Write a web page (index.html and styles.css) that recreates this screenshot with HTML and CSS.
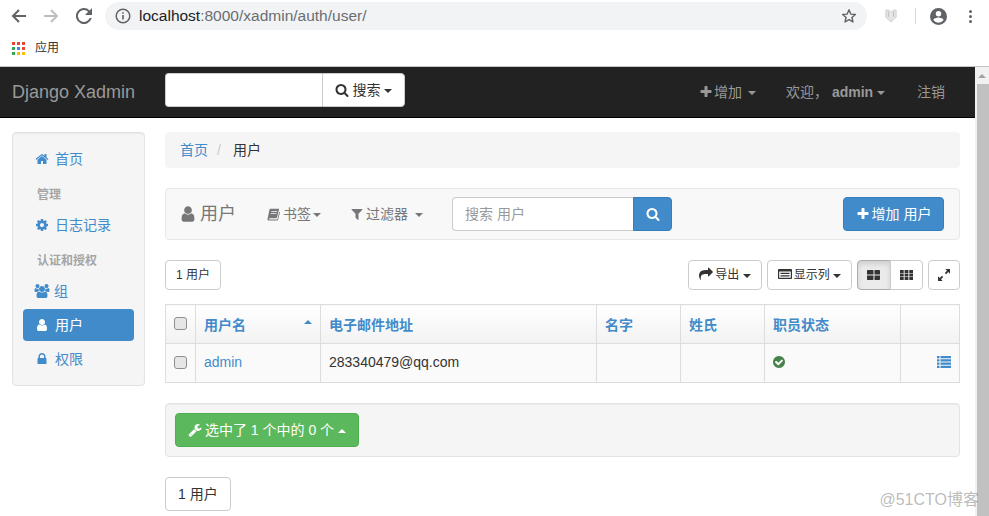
FILE: index.html
```html
<!DOCTYPE html>
<html lang="zh-CN">

<head>
    <meta charset="UTF-8">
    <meta name="viewport" content="width=device-width, initial-scale=1.0">
    <title>Django Xadmin</title>
    <link rel="stylesheet" href="styles.css">
</head>

<body>
    <svg class="sprite" xmlns="http://www.w3.org/2000/svg">
        <defs>
            <symbol id="i-user" viewBox="0 0 1792 1792"><path d="M1536 1399q0 109-62.500 187t-150.500 78h-854q-88 0-150.500-78t-62.500-187q0-85 8.500-160.500t31.500-152 58.500-131 94-89 134.500-34.500q131 128 313 128t313-128q76 0 134.500 34.500t94 89 58.500 131 31.500 152 8.500 160.500zm-256-887q0 159-112.500 271.500t-271.500 112.500-271.500-112.500-112.500-271.500 112.500-271.500 271.500-112.500 271.500 112.500 112.500 271.500z"/></symbol>
            <symbol id="i-search" viewBox="0 0 1792 1792"><path d="M1216 832q0-185-131.500-316.500t-316.500-131.500-316.500 131.500-131.500 316.500 131.500 316.500 316.500 131.500 316.500-131.500 131.500-316.500zm512 832q0 52-38 90t-90 38q-54 0-90-38l-343-342q-179 124-399 124-143 0-273.500-55.500t-225-150-150-225-55.500-273.500 55.500-273.500 150-225 225-150 273.500-55.500 273.500 55.500 225 150 150 225 55.500 273.500q0 220-124 399l343 343q37 37 37 90z"/></symbol>
            <symbol id="i-plus" viewBox="0 0 1792 1792"><path d="M1600 736v192q0 40-28 68t-68 28h-416v416q0 40-28 68t-68 28h-192q-40 0-68-28t-28-68v-416h-416q-40 0-68-28t-28-68v-192q0-40 28-68t68-28h416v-416q0-40 28-68t68-28h192q40 0 68 28t28 68v416h416q40 0 68 28t28 68z"/></symbol>
            <symbol id="i-filter" viewBox="0 0 1792 1792"><path d="M1595 295q17 41-14 70l-493 493v742q0 42-39 59-13 5-25 5-27 0-45-19l-256-256q-19-19-19-45v-486l-493-493q-31-29-14-70 17-39 59-39h1280q42 0 59 39z"/></symbol>
            <symbol id="i-check" viewBox="0 0 1792 1792"><path d="M1412 734q0-28-18-46l-91-90q-19-19-45-19t-45 19l-408 407-226-226q-19-19-45-19t-45 19l-91 90q-18 18-18 46 0 27 18 45l362 362q19 19 45 19 27 0 46-19l543-543q18-18 18-45zm252 162q0 209-103 385.500t-279.500 279.500-385.500 103-385.500-103-279.500-279.500-103-385.500 103-385.500 279.500-279.500 385.500-103 385.500 103 279.500 279.500 103 385.500z"/></symbol>
            <symbol id="i-lock" viewBox="0 0 1792 1792"><path d="M640 768h512v-192q0-106-75-181t-181-75-181 75-75 181v192zm832 96v576q0 40-28 68t-68 28h-960q-40 0-68-28t-28-68v-576q0-40 28-68t68-28h32v-192q0-184 132-316t316-132 316 132 132 316v192h32q40 0 68 28t28 68z"/></symbol>
            <symbol id="i-home" viewBox="0 0 1792 1792"><path d="M1472 992v480q0 26-19 45t-45 19h-384v-384h-256v384h-384q-26 0-45-19t-19-45v-480q0-1 .5-3t.5-3l575-474 575 474q1 2 1 6zm223-69l-62 74q-8 9-21 11h-3q-13 0-21-7l-692-577-692 577q-12 8-24 7-13-2-21-11l-62-74q-8-10-7-23.500t11-21.500l719-599q32-26 76-26t76 26l244 204v-195q0-14 9-23t23-9h192q14 0 23 9t9 23v408l219 182q10 8 11 21.500t-7 23.500z"/></symbol>
            <symbol id="i-cog" viewBox="0 0 1792 1792"><path d="M1152 896q0-106-75-181t-181-75-181 75-75 181 75 181 181 75 181-75 75-181zm512-109v222q0 12-8 23t-20 13l-185 28q-19 54-39 91 35 50 107 138 10 12 10 25t-9 23q-27 37-99 108t-94 71q-12 0-26-9l-138-108q-44 23-91 38-16 136-29 186-7 28-36 28h-222q-14 0-24.500-8.500t-11.500-21.500l-28-184q-49-16-90-37l-141 107q-10 9-25 9-14 0-25-11-126-114-165-168-7-10-7-23 0-12 8-23 15-21 51-66.500t54-70.500q-27-50-41-99l-183-27q-13-2-21-12.500t-8-23.500v-222q0-12 8-23t19-13l186-28q14-46 39-92-40-57-107-138-10-12-10-24 0-10 9-23 26-36 98.500-107.500t94.500-71.500q13 0 26 10l138 107q44-23 91-38 16-136 29-186 7-28 36-28h222q14 0 24.500 8.500t11.500 21.500l28 184q49 16 90 37l142-107q9-9 24-9 13 0 25 10 129 119 165 170 7 8 7 22 0 12-8 23-15 21-51 66.500t-54 70.500q26 50 41 98l183 28q13 2 21 12.500t8 23.500z"/></symbol>
            <symbol id="i-wrench" viewBox="0 0 1792 1792"><path d="M448 1472q0-26-19-45t-45-19-45 19-19 45 19 45 45 19 45-19 19-45zm644-420l-682 682q-37 37-90 37-52 0-91-37l-106-108q-38-36-38-90 0-53 38-91l681-681q39 98 114.500 173.500t173.500 114.500zm634-435q0 39-23 106-47 134-164.500 217.500t-258.500 83.500q-185 0-316.500-131.500t-131.500-316.500 131.500-316.500 316.500-131.500q58 0 121.500 16.500t107.500 46.500q16 11 16 28t-16 28l-293 169v224l193 107q5-3 79-48.500t135.500-81 70.500-35.500q15 0 23.500 10t8.500 25z"/></symbol>
            <symbol id="i-share" viewBox="0 0 1792 1792"><path d="M1792 640q0 26-19 45l-512 512q-19 19-45 19t-45-19-19-45v-256h-224q-98 0-175.500 6t-154 21.500-133 42.500-105.500 69.500-80 101-48.500 138.500-17.500 181q0 55 5 123 0 6 2.500 23.500t2.500 26.500q0 15-8.500 25t-23.500 10q-16 0-28-17-7-9-13-22t-13.500-30-10.500-24q-127-285-127-451 0-199 53-333 162-403 875-403h224v-256q0-26 19-45t45-19 45 19l512 512q19 19 19 45z"/></symbol>
            <symbol id="i-users" viewBox="0 0 1920 1792"><path d="M593 896q-162 5-265 128h-134q-82 0-138-40.500t-56-118.500q0-353 124-353 6 0 43.500 21t97.500 42.500 119 21.500q67 0 133-23-5 37-5 66 0 139 81 256zm1071 637q0 120-73 189.500t-194 69.500h-874q-121 0-194-69.500t-73-189.500q0-53 3.500-103.500t14-109 26.500-108.500 43-97.500 62-81 85.500-53.500 111.500-20q10 0 43 21.500t73 48 107 48 135 21.500 135-21.500 107-48 73-48 43-21.500q61 0 111.500 20t85.500 53.500 62 81 43 97.500 26.500 108.500 14 109 3.500 103.500zm-1024-1277q0 106-75 181t-181 75-181-75-75-181 75-181 181-75 181 75 75 181zm704 384q0 159-112.500 271.500t-271.500 112.500-271.500-112.500-112.500-271.500 112.500-271.500 271.500-112.500 271.500 112.500 112.500 271.500zm576 225q0 78-56 118.500t-138 40.500h-134q-103-123-265-128 81-117 81-256 0-29-5-66 66 23 133 23 59 0 119-21.500t97.500-42.500 43.500-21q124 0 124 353zm-128-609q0 106-75 181t-181 75-181-75-75-181 75-181 181-75 181 75 75 181z"/></symbol>
            <symbol id="i-book" viewBox="0 0 16 16"><path d="M4 1h11l-2.600 10.500c-.2.800-.8 1.200-1.500 1.200H3.200c-.6 0-.8.300-.8.600 0 .4.300.7.800.7h9.600l2.300-9.300.9.400-2.400 9.700c-.1.500-.5.700-1 .7H3c-1.500 0-2.600-1-2.300-2.400L3 2c.1-.600.500-1 1-1zm1.400 2.800-.2.900h7l.2-.9zm-.7 2.600-.2.900h7l.2-.9z"/></symbol>
            <symbol id="i-columns" viewBox="0 0 14 12"><path d="M1 1h12c.6 0 1 .4 1 1v8c0 .6-.4 1-1 1H1c-.6 0-1-.4-1-1V2c0-.6.400-1 1-1zm.2 2.400v6.400h11.600V3.400zM2.500 4.800h9V6h-9zM2.500 7.200h9v1.200h-9z"/></symbol>
            <symbol id="i-th-large" viewBox="0 0 13 10"><path d="M1 0h4.500c.6 0 1 .4 1 1v3.500h-6.500V1c0-.6.400-1 1-1zM7.500 0H12c.6 0 1 .4 1 1v3.500H7.500zM0 5.500h6.500V9c0 .6-.4 1-1 1H1c-.6 0-1-.4-1-1zM7.500 5.500H13V9c0 .6-.4 1-1 1H7.500z"/></symbol>
            <symbol id="i-th" viewBox="0 0 13 10"><path d="M0 0h3.700v3H0zM4.600 0h3.800v3H4.600zM9.300 0H13v3H9.300zM0 3.500h3.700v3H0zM4.600 3.500h3.800v3H4.600zM9.300 3.500H13v3H9.300zM0 7h3.700v3H0zM4.600 7h3.800v3H4.600zM9.300 7H13v3H9.300z"/></symbol>
            <symbol id="i-expand" viewBox="0 0 14 14"><path d="M8.500 0H14v5.500l-2-2-2.600 2.600-1.500-1.500L10.500 2zM5.500 14H0V8.500l2 2 2.600-2.600 1.500 1.500L3.500 12z"/></symbol>
            <symbol id="i-list" viewBox="0 0 14 12"><path d="M0 0h2.500v2.200H0zm3.500 0H14v2.200H3.500zM0 3.300h2.500v2.200H0zm3.500 0H14v2.200H3.500zM0 6.600h2.500v2.200H0zm3.500 0H14v2.200H3.500zM0 9.800h2.500V12H0zm3.500 0H14V12H3.500z"/></symbol>
        </defs>
    </svg>

    <div class="browser-bar">
        <svg class="tool-icon back" viewBox="0 0 16 16"><path d="M15 7H4.400l4.300-4.300L7.300 1.300.600 8l6.700 6.700 1.400-1.400L4.400 9H15z"/></svg>
        <svg class="tool-icon forward" viewBox="0 0 16 16"><path d="M1 7h10.600L7.300 2.700l1.400-1.400L15.400 8l-6.700 6.700-1.400-1.400L11.600 9H1z"/></svg>
        <svg class="tool-icon reload" viewBox="0 0 16 16"><path d="M13.600 2.400A8 8 0 1 0 15.700 10h-2.100a6 6 0 1 1-1.400-6.200L9 7h7V0z"/></svg>
        <div class="url-pill">
            <svg class="info-icon" viewBox="0 0 16 16"><circle cx="8" cy="8" r="6.800" fill="none" stroke="#5f6368" stroke-width="1.500"/><path d="M7.200 7h1.600v4.600H7.200zM7.200 4.200h1.600v1.600H7.200z" fill="#5f6368"/></svg>
            <span class="url"><span class="url-host">localhost</span>:8000/xadmin/auth/user/</span>
            <svg class="star-icon" viewBox="0 0 16 16"><path d="M8 1.800l1.800 4.300 4.600.4-3.500 3 1.100 4.500L8 11.600 4 14l1.100-4.500-3.500-3 4.600-.4z" fill="none" stroke="#5f6368" stroke-width="1.400" stroke-linejoin="round"/></svg>
        </div>
        <svg class="shield-icon" viewBox="0 0 14 16"><path d="M1 1h3l3 2.500L10 1h3v8.500L7 15 1 9.500z" fill="#e4e6e4" stroke="#c9cbc9"/><path d="M4 3v6M10 3v6" stroke="#b5b8b5" fill="none"/></svg>
        <span class="tool-divider"></span>
        <svg class="avatar-icon" viewBox="0 0 18 18"><path fill="#5f6368" d="M9 0a9 9 0 1 0 0 18A9 9 0 0 0 9 0zm0 3.200a2.900 2.900 0 1 1 0 5.800 2.900 2.900 0 0 1 0-5.800zm0 12.500a6.500 6.500 0 0 1-5.400-2.900c0-1.800 3.600-2.800 5.400-2.800s5.400 1 5.400 2.800A6.500 6.500 0 0 1 9 15.700z"/></svg>
        <span class="menu-dots"><i></i><i></i><i></i></span>
    </div>

    <div class="bookmarks-bar">
        <svg class="apps-icon" viewBox="0 0 13 13">
            <path fill="#ea4335" d="M0 0h3v3H0zM5 0h3v3H5zM10 0h3v3h-3z"/>
            <path fill="#34a853" d="M0 5h3v3H0z"/>
            <path fill="#4285f4" d="M5 5h3v3H5z"/>
            <path fill="#ea4335" d="M10 5h3v3h-3z"/>
            <path fill="#34a853" d="M0 10h3v3H0z"/>
            <path fill="#fbbc05" d="M5 10h3v3H5zM10 10h3v3h-3z"/>
        </svg>
        <span>应用</span>
    </div>

    <div class="viewport">
        <div class="page">
            <nav class="navbar">
                <a class="brand" href="#">Django Xadmin</a>
                <form class="nav-search">
                    <input class="nav-search-input" type="text">
                    <button class="nav-search-btn" type="button"><svg class="ico"><use href="#i-search"/></svg> 搜索 <span class="caret"></span></button>
                </form>
                <ul class="nav-right">
                    <li class="nav-add"><svg class="ico"><use href="#i-plus"/></svg>增加<span class="caret"></span></li>
                    <li class="nav-user">欢迎， <strong>admin</strong> <span class="caret"></span></li>
                    <li class="nav-logout">注销</li>
                </ul>
            </nav>

            <div class="content">
                <aside class="sidebar">
                    <a class="side-link" href="#"><svg class="ico"><use href="#i-home"/></svg>首页</a>
                    <div class="side-header">管理</div>
                    <a class="side-link" href="#"><svg class="ico"><use href="#i-cog"/></svg>日志记录</a>
                    <div class="side-header">认证和授权</div>
                    <a class="side-link" href="#"><svg class="ico ico-users"><use href="#i-users"/></svg>组</a>
                    <a class="side-link active" href="#"><svg class="ico"><use href="#i-user"/></svg>用户</a>
                    <a class="side-link" href="#"><svg class="ico"><use href="#i-lock"/></svg>权限</a>
                </aside>

                <main class="main">
                    <ol class="breadcrumb">
                        <li><a href="#">首页</a></li>
                        <li class="crumb-sep">/</li>
                        <li>用户</li>
                    </ol>

                    <div class="list-bar">
                        <h3 class="list-title"><svg class="ico"><use href="#i-user"/></svg>用户</h3>
                        <span class="bar-menu bar-bookmarks"><svg class="ico"><use href="#i-book"/></svg>书签<span class="caret"></span></span>
                        <span class="bar-menu bar-filters"><svg class="ico"><use href="#i-filter"/></svg>过滤器 <span class="caret"></span></span>
                        <div class="bar-search">
                            <input class="bar-search-input" type="text" placeholder="搜索 用户">
                            <button class="btn-primary bar-search-btn" type="button"><svg class="ico"><use href="#i-search"/></svg></button>
                        </div>
                        <button class="btn-primary bar-add" type="button"><svg class="ico"><use href="#i-plus"/></svg>增加 用户</button>
                    </div>

                    <div class="table-tools">
                        <span class="btn btn-sm count-btn">1 用户</span>
                        <div class="tools-right">
                            <span class="btn btn-sm"><svg class="ico"><use href="#i-share"/></svg>导出 <span class="caret"></span></span>
                            <span class="btn btn-sm"><svg class="ico"><use href="#i-columns"/></svg>显示列 <span class="caret"></span></span>
                            <div class="btn-group">
                                <span class="btn btn-sm btn-on"><svg class="ico ico-th"><use href="#i-th-large"/></svg></span>
                                <span class="btn btn-sm"><svg class="ico ico-th"><use href="#i-th"/></svg></span>
                            </div>
                            <span class="btn btn-sm btn-expand"><svg class="ico ico-expand"><use href="#i-expand"/></svg></span>
                        </div>
                    </div>

                    <table class="grid">
                        <colgroup>
                            <col class="col-check">
                            <col class="col-name">
                            <col class="col-email">
                            <col class="col-first">
                            <col class="col-last">
                            <col class="col-staff">
                            <col>
                        </colgroup>
                        <thead>
                            <tr>
                                <th><span class="check"></span></th>
                                <th class="sorted"><a href="#">用户名</a><span class="caret caret-up"></span></th>
                                <th><a href="#">电子邮件地址</a></th>
                                <th><a href="#">名字</a></th>
                                <th><a href="#">姓氏</a></th>
                                <th><a href="#">职员状态</a></th>
                                <th></th>
                            </tr>
                        </thead>
                        <tbody>
                            <tr>
                                <td><span class="check"></span></td>
                                <td><a href="#">admin</a></td>
                                <td>283340479@qq.com</td>
                                <td></td>
                                <td></td>
                                <td><svg class="ico ico-yes"><use href="#i-check"/></svg></td>
                                <td class="cell-more"><svg class="ico ico-list"><use href="#i-list"/></svg></td>
                            </tr>
                        </tbody>
                    </table>

                    <div class="action-bar">
                        <button class="btn-success" type="button"><svg class="ico"><use href="#i-wrench"/></svg>选中了 1 个中的 0 个 <span class="caret caret-up"></span></button>
                    </div>

                    <span class="btn page-count">1 用户</span>
                </main>
            </div>
        </div>

        <div class="scrollbar">
            <span class="scroll-up"></span>
            <span class="scroll-thumb"></span>
        </div>

        <div class="watermark">@51CTO博客</div>
    </div>
</body>

</html>
```

FILE: styles.css
```css
* {
    box-sizing: border-box;
}

html,
body {
    height: 516px;
    margin: 0;
    overflow: hidden;
}

body {
    display: flex;
    flex-direction: column;
    background-color: #fff;
    color: #333;
    font-family: "Liberation Sans", "Noto Sans CJK SC", sans-serif;
    font-size: 14px;
    line-height: 20px;
}

a {
    color: #428bca;
    text-decoration: none;
}

.sprite {
    display: none;
}

.ico {
    display: inline-block;
    width: 14px;
    height: 14px;
    fill: currentColor;
    vertical-align: -2px;
}

.caret {
    display: inline-block;
    width: 0;
    height: 0;
    border-top: 4px solid;
    border-right: 4px solid transparent;
    border-left: 4px solid transparent;
    vertical-align: middle;
}

.caret-up {
    border-top: 0;
    border-bottom: 4px solid;
}

/* browser */
.browser-bar {
    display: flex;
    align-items: center;
    flex: none;
    height: 33px;
    padding-bottom: 1px;
    padding-left: 11px;
}

.tool-icon {
    flex: none;
    width: 16px;
    height: 16px;
    fill: #5f6368;
}

.forward {
    margin-left: 16px;
    fill: #bcbec0;
}

.reload {
    margin-left: 17px;
}

.url-pill {
    display: flex;
    align-items: center;
    flex: none;
    width: 762px;
    height: 28px;
    margin-left: 13px;
    padding: 0 10px;
    border-radius: 14px;
    background-color: #f1f3f4;
}

.info-icon {
    width: 16px;
    height: 16px;
}

.url {
    flex: 1;
    margin-left: 8px;
    color: #6a6e72;
    font-size: 15.5px;
}

.url-host {
    color: #202124;
}

.star-icon {
    width: 16px;
    height: 16px;
}

.shield-icon {
    flex: none;
    width: 12px;
    height: 16px;
    margin-left: 18px;
}

.tool-divider {
    flex: none;
    width: 1px;
    height: 16px;
    margin-left: 18px;
    background-color: #d5d7d9;
}

.avatar-icon {
    flex: none;
    width: 17px;
    height: 17px;
    margin-left: 14px;
}

.menu-dots {
    display: flex;
    flex-direction: column;
    flex: none;
    gap: 2px;
    margin-left: 22px;
}

.menu-dots i {
    width: 3px;
    height: 3px;
    border-radius: 50%;
    background-color: #5f6368;
}

.bookmarks-bar {
    display: flex;
    align-items: center;
    flex: none;
    gap: 10px;
    height: 34px;
    padding-bottom: 3px;
    padding-left: 12px;
    border-bottom: 1px solid #c4c4c4;
    font-size: 12px;
}

.apps-icon {
    width: 13px;
    height: 13px;
}

/* page */
.viewport {
    position: relative;
    display: flex;
    flex: 1;
    min-height: 0;
}

.page {
    flex: none;
    width: 975px;
}

.scrollbar {
    display: flex;
    flex-direction: column;
    flex: none;
    width: 14px;
    background-color: #f1f1f1;
}

.scroll-up {
    width: 0;
    height: 0;
    margin: 7px auto 6px;
    border-right: 4px solid transparent;
    border-bottom: 4px solid #a3a3a3;
    border-left: 4px solid transparent;
}

.scroll-thumb {
    flex: 1;
    margin-left: 2px;
    background-color: #c1c1c1;
}

.watermark {
    position: absolute;
    right: 10px;
    bottom: 6px;
    color: rgba(130, 130, 130, 0.55);
    font-size: 16px;
}

.navbar {
    display: flex;
    align-items: center;
    height: 51px;
    padding-left: 12px;
    border-bottom: 1px solid #000;
    background-color: #222;
    color: #999;
}

.brand {
    width: 153px;
    color: #999;
    font-size: 18px;
}

.nav-search {
    display: flex;
    height: 34px;
    margin-bottom: 5px;
}

.nav-search-input {
    width: 157px;
    height: 34px;
    border: 1px solid #ccc;
    border-right: 0;
    border-radius: 4px 0 0 4px;
}

.nav-search-btn {
    width: 83px;
    height: 34px;
    padding: 0;
    border: 1px solid #ccc;
    border-radius: 0 4px 4px 0;
    background-color: #fff;
    color: #333;
    font: inherit;
}

.nav-right {
    display: flex;
    margin: 0 0 0 auto;
    padding: 0 30px 0 0;
    list-style: none;
}

.nav-add {
    width: 87px;
}

.nav-add .ico {
    margin-right: 1px;
}

.nav-add .caret {
    margin-left: 6px;
}

.nav-user {
    width: 131px;
}

/* sidebar */
.content {
    display: flex;
    align-items: flex-start;
    padding: 14px 15px 0 12px;
}

.sidebar {
    display: flex;
    flex-direction: column;
    flex: none;
    width: 133px;
    padding: 10px;
    border: 1px solid #e3e3e3;
    border-radius: 4px;
    background-color: #f5f5f5;
    box-shadow: inset 0 1px 1px rgba(0, 0, 0, 0.05);
}

.side-link {
    height: 32px;
    padding: 6px 12px;
    border-radius: 4px;
}

.side-link .ico {
    margin-right: 6px;
}

.side-link + .side-link {
    margin-top: 2px;
}

.side-link.active {
    background-color: #428bca;
    color: #fff;
}

.side-link .ico-users {
    width: 16px;
    margin-right: 4px;
    margin-left: -1px;
}

.side-header {
    height: 34px;
    padding: 10px 14px 0;
    color: #a5a5a5;
    font-size: 12px;
    font-weight: bold;
}

/* main column */
.main {
    flex: 1;
    margin-left: 20px;
}

.breadcrumb {
    display: flex;
    height: 36px;
    margin: 0;
    padding: 8px 15px;
    border-radius: 4px;
    background-color: #f5f5f5;
    list-style: none;
}

.crumb-sep {
    padding: 0 12px 0 9px;
    color: #ccc;
}

.list-bar {
    display: flex;
    align-items: center;
    height: 52px;
    margin-top: 20px;
    padding: 0 15px;
    border: 1px solid #e7e7e7;
    border-radius: 4px;
    background-color: #f8f8f8;
    color: #777;
}

.list-title {
    flex: none;
    width: 86px;
    margin: 0;
    font-size: 18px;
    font-weight: normal;
}

.list-title .ico {
    width: 18px;
    height: 18px;
    margin-right: 3px;
    margin-left: -2px;
    vertical-align: -3px;
}

.bar-menu .ico {
    margin-right: 2px;
}

.bar-bookmarks {
    width: 84px;
}

.bar-bookmarks .ico {
    width: 13px;
    height: 13px;
    margin-right: 3px;
}

.bar-bookmarks .caret {
    margin-left: 2px;
}

.bar-filters {
    width: 101px;
}

.bar-filters .ico {
    margin-left: -1px;
}

.bar-filters .caret {
    margin-left: 3px;
}

.bar-search {
    display: flex;
    height: 34px;
}

.bar-search-input {
    width: 181px;
    height: 34px;
    padding: 6px 12px;
    border: 1px solid #ccc;
    border-right: 0;
    border-radius: 4px 0 0 4px;
    background-color: #fff;
    font: inherit;
}

.bar-search-input::placeholder {
    color: #999;
}

.btn-primary {
    height: 34px;
    padding: 0;
    border: 1px solid #357ebd;
    background-color: #428bca;
    color: #fff;
    font: inherit;
}

.bar-search-btn {
    width: 39px;
    border-radius: 0 4px 4px 0;
}

.bar-add {
    width: 101px;
    margin-left: auto;
    border-radius: 4px;
}

.bar-add .ico {
    margin-right: 2px;
}

.btn {
    display: inline-block;
    border: 1px solid #ccc;
    border-radius: 4px;
    background-color: #fff;
    color: #333;
}

.btn-sm {
    height: 30px;
    padding: 4px 10px;
    font-size: 12px;
    line-height: 20px;
}

.btn-sm .ico {
    margin-right: 2px;
}

.table-tools {
    display: flex;
    justify-content: space-between;
    margin-top: 20px;
}

.tools-right {
    display: flex;
    gap: 5px;
}

.btn-group {
    display: flex;
}

.btn-group .btn:first-child {
    width: 34px;
    border-radius: 4px 0 0 4px;
    padding: 4px 9px;
}

.btn-group .btn:last-child {
    width: 33px;
    margin-left: -1px;
    border-radius: 0 4px 4px 0;
    padding: 4px 9px;
}

.btn-on {
    background-color: #ebebeb;
    border-color: #adadad;
    box-shadow: inset 0 3px 5px rgba(0, 0, 0, 0.125);
}

.btn-sm .ico-th {
    width: 13px;
    height: 10px;
    margin: 0;
    vertical-align: -1px;
}

.btn-expand {
    width: 32px;
    padding: 4px 9px;
}

.btn-sm .ico-expand {
    width: 12px;
    height: 12px;
    margin: 0;
}

/* table */
.grid {
    width: 100%;
    margin-top: 14px;
    border-collapse: collapse;
    table-layout: fixed;
    background-color: #fafafa;
}

.col-check {
    width: 30px;
}

.col-name {
    width: 125px;
}

.col-email {
    width: 276px;
}

.col-first,
.col-last {
    width: 84px;
}

.col-staff {
    width: 136px;
}

.grid th,
.grid td {
    height: 39px;
    border: 1px solid #ddd;
    text-align: left;
}

.grid th {
    padding: 9px 8px 7px;
    background-image: linear-gradient(to bottom, #fff, #f2f2f2);
}

.grid td {
    padding: 7px 8px 9px;
}

.grid th:first-child,
.grid td:first-child {
    padding: 0 0 2px 8px;
}

.sorted {
    position: relative;
}

.sorted .caret {
    position: absolute;
    top: 15px;
    right: 8px;
    color: #428bca;
}

.check {
    display: block;
    width: 13px;
    height: 13px;
    border: 1px solid #8f8f8f;
    border-radius: 3px;
    background-color: #e6e6e6;
}

.grid .cell-more {
    text-align: right;
}

.ico-yes {
    width: 14px;
    height: 14px;
    margin-left: -1px;
    color: #47824a;
}

.ico-list {
    width: 14px;
    height: 12px;
    color: #428bca;
    vertical-align: -1px;
}

.action-bar {
    height: 54px;
    margin-top: 20px;
    padding: 9px;
    border: 1px solid #e3e3e3;
    border-radius: 4px;
    background-color: #f5f5f5;
    box-shadow: inset 0 1px 1px rgba(0, 0, 0, 0.05);
}

.btn-success {
    width: 184px;
    height: 34px;
    padding: 0;
    border: 1px solid #4cae4c;
    border-radius: 4px;
    background-color: #5cb85c;
    color: #fff;
    font: inherit;
}

.btn-success .ico {
    margin-right: 3px;
}

.page-count {
    width: 66px;
    height: 34px;
    margin-top: 20px;
    padding: 6px 12px;
}
```
